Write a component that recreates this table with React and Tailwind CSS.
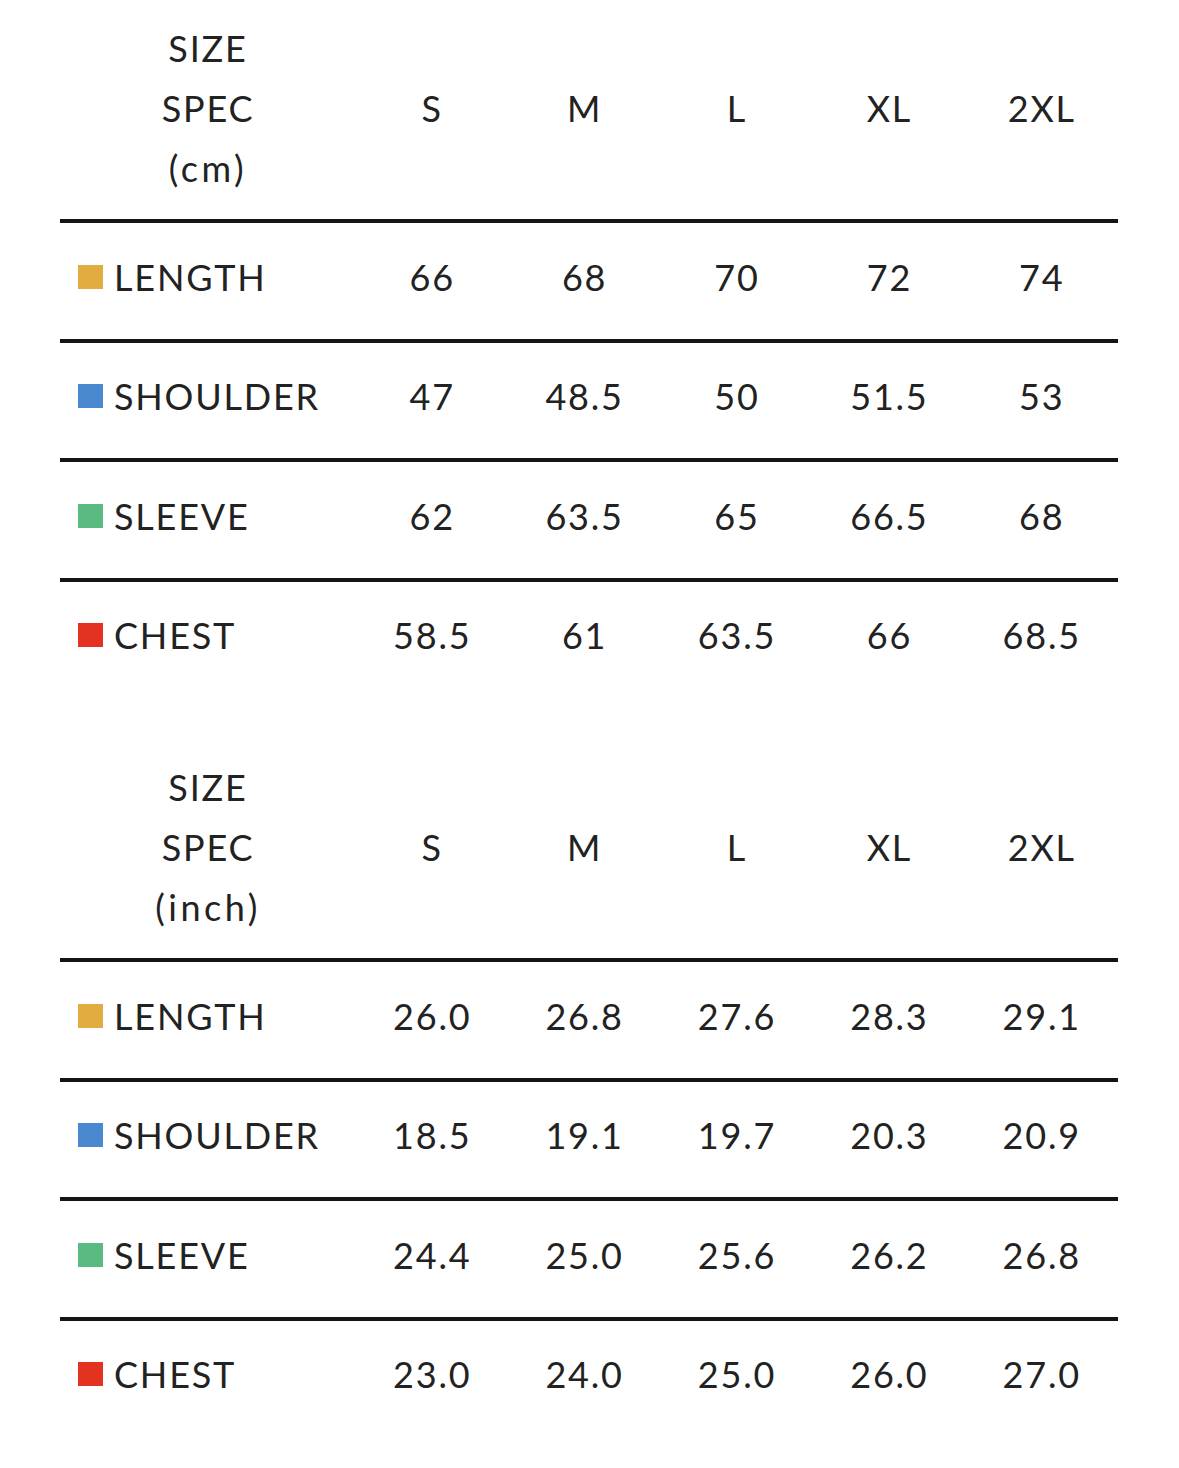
import React from "react";

const tables = [
  {
    unit: "(cm)",
    rows: [
      { label: "LENGTH", color: "bg-[#e3ac41]", values: ["66", "68", "70", "72", "74"] },
      { label: "SHOULDER", color: "bg-[#4a88cf]", values: ["47", "48.5", "50", "51.5", "53"] },
      { label: "SLEEVE", color: "bg-[#5bb982]", values: ["62", "63.5", "65", "66.5", "68"] },
      { label: "CHEST", color: "bg-[#e3321f]", values: ["58.5", "61", "63.5", "66", "68.5"] },
    ],
  },
  {
    unit: "(inch)",
    rows: [
      { label: "LENGTH", color: "bg-[#e3ac41]", values: ["26.0", "26.8", "27.6", "28.3", "29.1"] },
      { label: "SHOULDER", color: "bg-[#4a88cf]", values: ["18.5", "19.1", "19.7", "20.3", "20.9"] },
      { label: "SLEEVE", color: "bg-[#5bb982]", values: ["24.4", "25.0", "25.6", "26.2", "26.8"] },
      { label: "CHEST", color: "bg-[#e3321f]", values: ["23.0", "24.0", "25.0", "26.0", "27.0"] },
    ],
  },
];

const sizes = ["S", "M", "L", "XL", "2XL"];

function Table({ unit, rows }) {
  return (
    <div className="w-[1058px]">
      <div className="grid grid-cols-[296px_repeat(5,1fr)] h-[219px] items-center pb-1">
        <div className="flex flex-col items-center leading-[60px]">
          <span>SIZE</span>
          <span>SPEC</span>
          <span className="tracking-[3.5px]">{unit}</span>
        </div>
        {sizes.map((s) => (
          <div key={s} className="text-center">{s}</div>
        ))}
      </div>
      {rows.map((r) => (
        <div
          key={r.label}
          className="grid grid-cols-[296px_repeat(5,1fr)] h-[119.5px] border-t-4 border-[#141414] items-center pb-2"
        >
          <div className="flex items-center pl-[18px]">
            <span className={`w-[25px] h-[24px] ${r.color} mr-[11px] shrink-0`} />
            <span>{r.label}</span>
          </div>
          {r.values.map((v, i) => (
            <div key={i} className="text-center">{v}</div>
          ))}
        </div>
      ))}
    </div>
  );
}

export default function App() {
  return (
    <div className="w-[1179px] h-[1468px] bg-white text-[#222222] text-[36px] font-normal tracking-[1.8px] font-['Lato',sans-serif] pl-[60px] flex flex-col gap-[42px]">
      {tables.map((t) => (
        <Table key={t.unit} {...t} />
      ))}
    </div>
  );
}
